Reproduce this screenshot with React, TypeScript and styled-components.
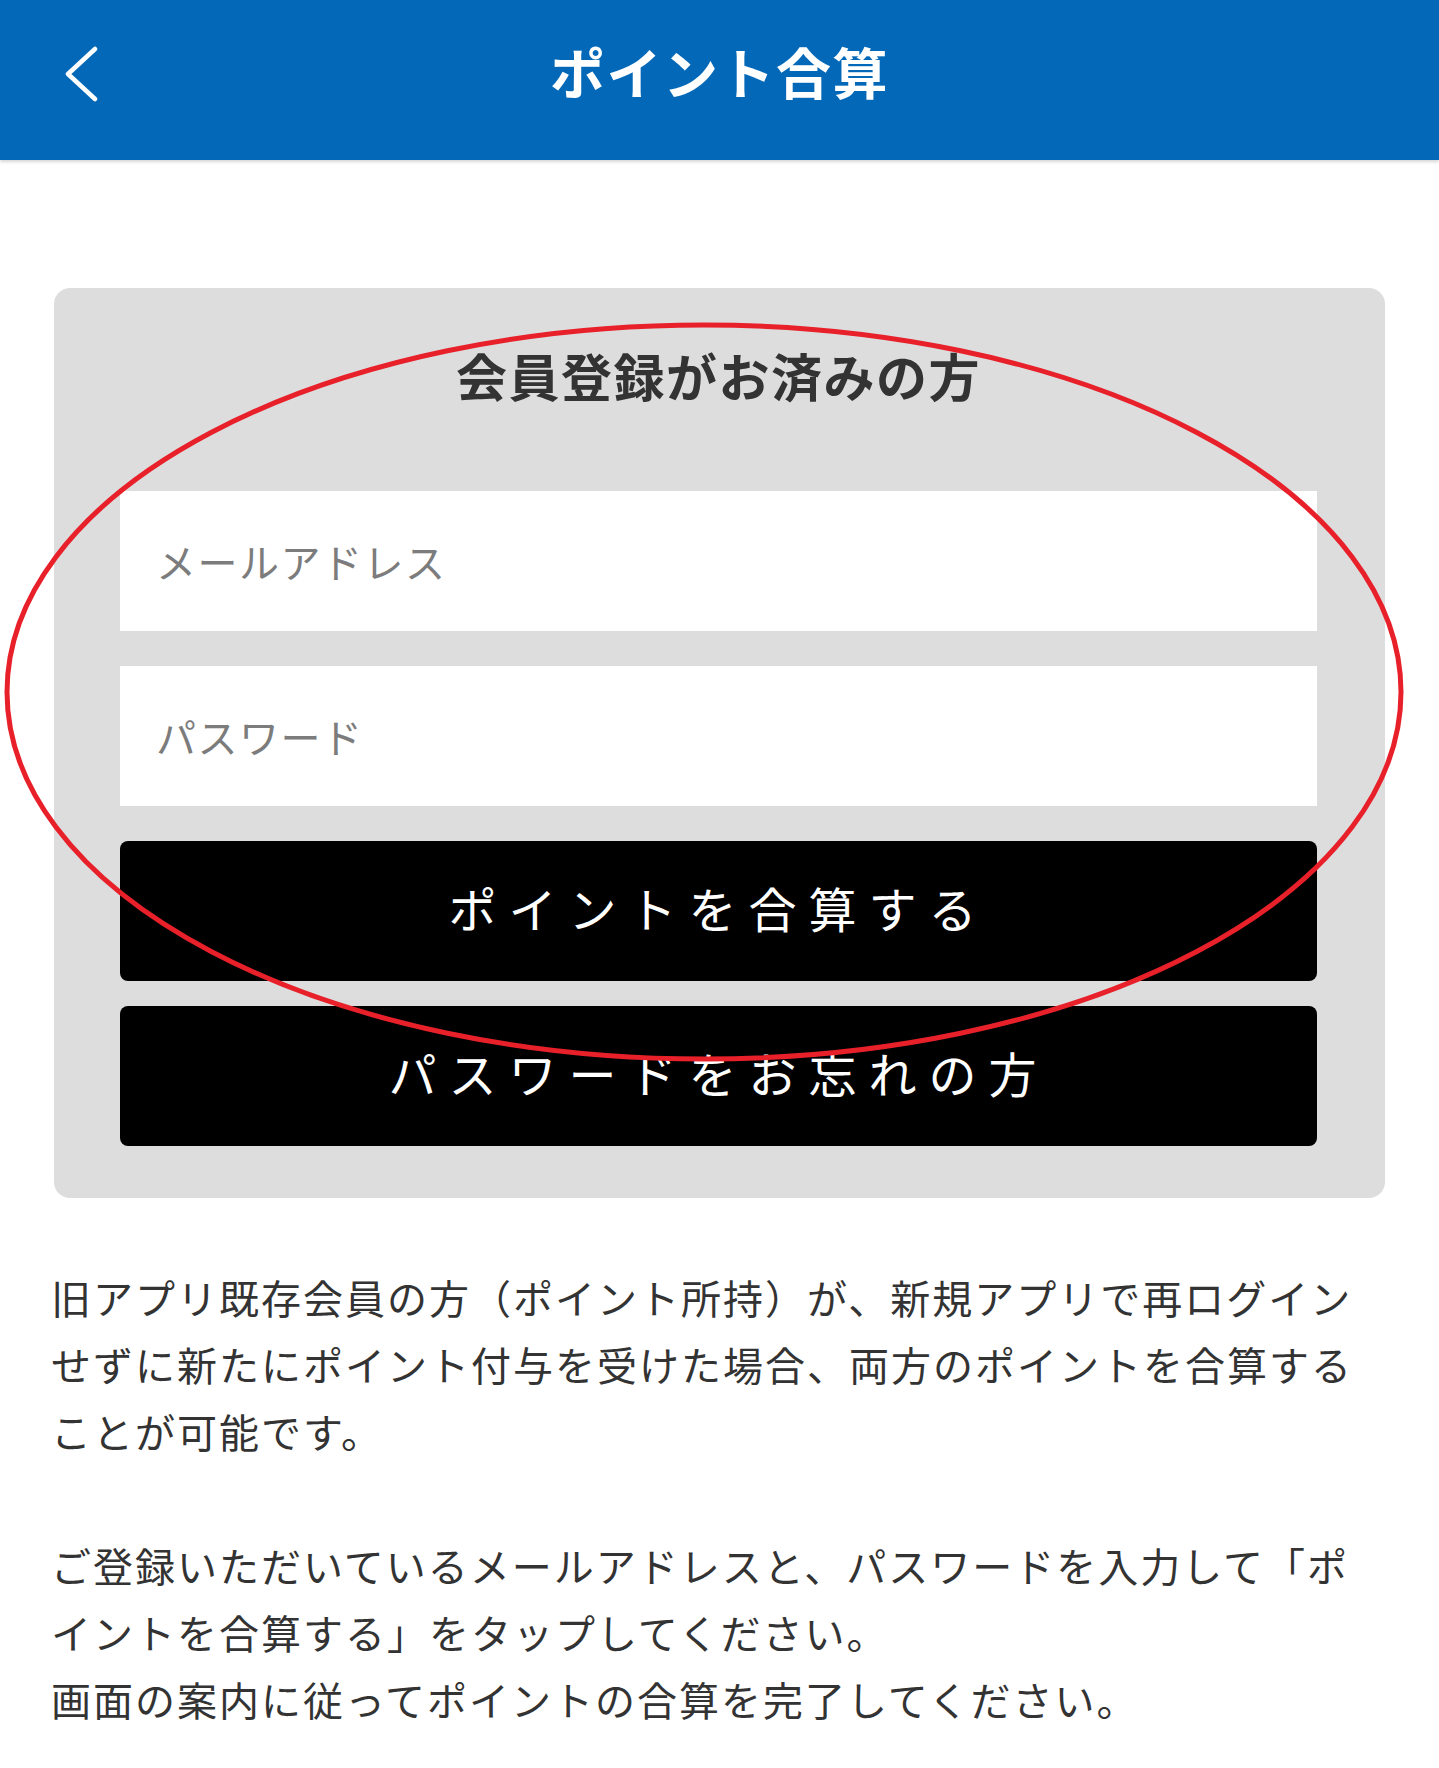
import styled, { createGlobalStyle } from 'styled-components';

const GlobalStyle = createGlobalStyle`
  html, body {
    margin: 0;
    padding: 0;
    background: #fff;
  }
  body {
    font-family: "Noto Sans CJK JP", "Noto Sans", sans-serif;
  }
  * {
    box-sizing: border-box;
  }
`;

const Page = styled.div`
  position: relative;
  width: 1439px;
  min-height: 1768px;
  background: #fff;
`;

const Header = styled.header`
  display: grid;
  grid-template-columns: 1fr auto 1fr;
  align-items: center;
  height: 160px;
  padding-bottom: 20px;
  background: #0268b7;
  box-shadow: 0 2px 3px rgba(0, 0, 0, 0.16);
`;

const BackButton = styled.button`
  justify-self: start;
  display: flex;
  margin-left: 64px;
  margin-top: 8px;
  padding: 0;
  border: none;
  background: none;
  cursor: pointer;
`;

const Title = styled.h1`
  margin: 0;
  color: #fff;
  font-size: 55px;
  font-weight: 700;
  line-height: 60px;
  letter-spacing: 1.5px;
`;

const Main = styled.main`
  padding: 128px 54px 0;
`;

const LoginCard = styled.section`
  display: flex;
  flex-direction: column;
  padding: 57px 68px 52px 66px;
  background: #dddddd;
  border-radius: 16px;
`;

const CardHeading = styled.h2`
  margin: 0 0 86px;
  color: #333;
  font-size: 51px;
  font-weight: 700;
  line-height: 60px;
  letter-spacing: 1.5px;
  text-align: center;
`;

const Field = styled.input<{ $gap: number }>`
  display: block;
  width: 100%;
  height: 140px;
  margin-bottom: ${(p) => p.$gap}px;
  padding: 0 36px;
  border: none;
  border-radius: 0;
  background: #fff;
  color: #333;
  font-family: inherit;
  font-size: 40px;
  letter-spacing: 1.5px;
  outline: none;
  &::placeholder {
    color: #7c7c7c;
  }
`;

const ActionButton = styled.button<{ $gap: number }>`
  display: flex;
  align-items: center;
  justify-content: center;
  width: 100%;
  height: 140px;
  margin-bottom: ${(p) => p.$gap}px;
  padding: 0 0 8px;
  border: none;
  border-radius: 8px;
  background: #000;
  color: #fff;
  font-family: inherit;
  font-size: 48px;
  font-weight: 400;
  letter-spacing: 12px;
  cursor: pointer;
`;

const Notes = styled.div`
  margin-top: 66px;
  margin-left: -3px;
  color: #333;
  font-size: 40px;
  line-height: 67px;
  letter-spacing: 2px;
`;

const Para = styled.p`
  margin: 0;
  & + & {
    margin-top: 67px;
  }
`;

const Annotation = styled.svg`
  position: absolute;
  left: 0;
  top: 0;
  pointer-events: none;
`;

function ChevronLeft() {
  return (
    <svg width="34" height="56" viewBox="0 0 34 56" fill="none">
      <polyline
        points="31,3 4,28 31,53"
        stroke="#fff"
        strokeWidth="4.5"
        strokeLinecap="round"
        strokeLinejoin="round"
      />
    </svg>
  );
}

export default function App() {
  return (
    <Page>
      <GlobalStyle />
      <Header>
        <BackButton type="button" aria-label="戻る">
          <ChevronLeft />
        </BackButton>
        <Title>ポイント合算</Title>
        <div />
      </Header>

      <Main>
        <LoginCard>
          <CardHeading>会員登録がお済みの方</CardHeading>
          <Field $gap={35} type="email" placeholder="メールアドレス" />
          <Field $gap={35} type="password" placeholder="パスワード" />
          <ActionButton $gap={25} type="button">
            ポイントを合算する
          </ActionButton>
          <ActionButton $gap={0} type="button">
            パスワードをお忘れの方
          </ActionButton>
        </LoginCard>

        <Notes>
          <Para>
            旧アプリ既存会員の方（ポイント所持）が、新規アプリで再ログインせずに新たにポイント付与を受けた場合、両方のポイントを合算することが可能です。
          </Para>
          <Para>
            ご登録いただいているメールアドレスと、パスワードを入力して「ポイントを合算する」をタップしてください。
            <br />
            画面の案内に従ってポイントの合算を完了してください。
          </Para>
        </Notes>
      </Main>

      <Annotation width="1439" height="1768" viewBox="0 0 1439 1768">
        <ellipse
          cx="704"
          cy="692"
          rx="697"
          ry="367"
          fill="none"
          stroke="#e8202a"
          strokeWidth="5"
        />
      </Annotation>
    </Page>
  );
}
